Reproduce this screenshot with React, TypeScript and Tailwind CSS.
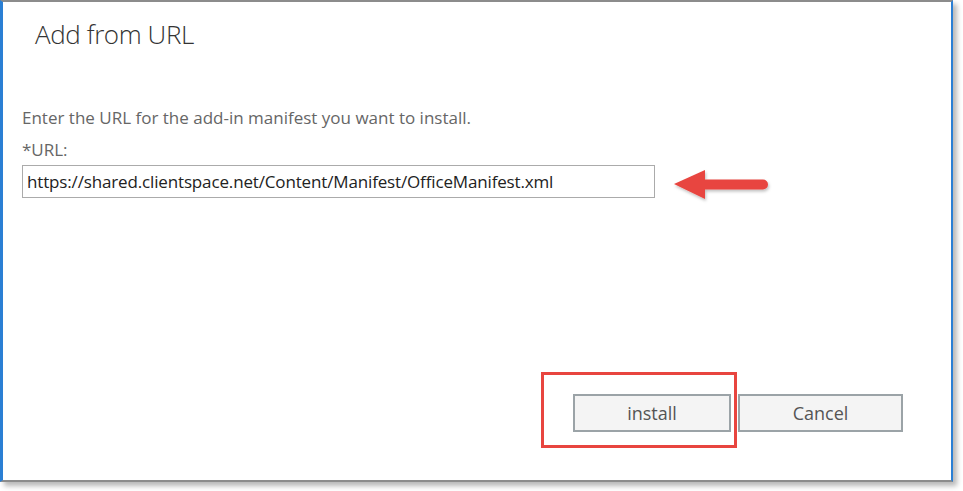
import React from 'react';

export default function App() {
  const font = { fontFamily: '"Open Sans", "Noto Sans", Arial, sans-serif' };

  return (
    <div className="w-[963px] h-[491px] bg-white relative overflow-hidden" style={font}>
      {/* Dialog frame */}
      <div className="w-[953px] h-[482px] bg-white border-t-2 border-b-2 border-l-[3px] border-r-2 border-t-[#8c8c8c] border-b-[#8c8c8c] border-l-[#2a7fd4] border-r-[#2a7fd4] shadow-[4px_4px_5px_rgba(0,0,0,0.28)] flex flex-col pl-[19px] pr-[296px]">
        <h1 className="ml-[13px] mt-[14px] text-[26px] leading-[36px] font-light text-[#333333] tracking-[-0.4px]">
          Add from URL
        </h1>

        <p className="mt-[55px] text-[17px] leading-[22px] text-[#666666]">
          Enter the URL for the add-in manifest you want to install.
        </p>
        <label className="mt-[10px] text-[17px] leading-[22px] text-[#666666]">*URL:</label>
        <div className="mt-[4px] h-[33px] border border-[#ababab] flex items-center pl-[4px]">
          <span className="text-[17px] text-[#222222] tracking-[-0.15px]">
            https://shared.clientspace.net/Content/Manifest/OfficeManifest.xml
          </span>
        </div>

        <div className="flex-1" />

        {/* Buttons */}
        <div className="flex justify-end gap-[7px] mb-[48px] -mr-[248px]">
          <button className="w-[158px] h-[38px] border-2 border-[#9ba3a7] bg-[#f4f4f4] text-[18px] text-[#555555]">
            install
          </button>
          <button className="w-[165px] h-[38px] border-2 border-[#9ba3a7] bg-[#f4f4f4] text-[18px] text-[#555555]">
            Cancel
          </button>
        </div>
      </div>

      {/* Annotation: red rectangle around install */}
      <div className="absolute left-[541px] top-[372px] w-[196px] h-[76px] border-[3px] border-[#e8453f]" />

      {/* Annotation: red arrow */}
      <svg className="absolute left-[670px] top-[166px]" width="104" height="38" viewBox="0 0 104 38">
        <defs>
          <filter id="sh" x="-10%" y="-20%" width="130%" height="160%">
            <feDropShadow dx="1" dy="2" stdDeviation="1.5" floodColor="#000" floodOpacity="0.25" />
          </filter>
        </defs>
        <g filter="url(#sh)">
          <path d="M4 18 L35 4 L35 33 Z" fill="#e8453f" />
          <path d="M33 13.5 L93 13.5 A5 5 0 0 1 93 23.5 L33 23.5 Z" fill="#e8453f" />
        </g>
      </svg>
    </div>
  );
}
